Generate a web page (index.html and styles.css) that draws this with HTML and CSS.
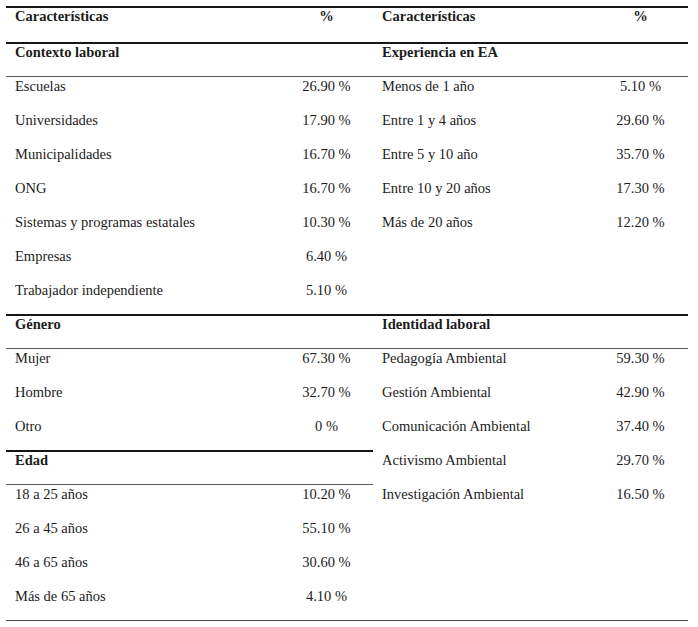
FILE: index.html
```html
<!DOCTYPE html>
<html lang="es">
<head>
<meta charset="utf-8">
<title>Características</title>
<link rel="stylesheet" href="styles.css">
</head>
<body>
<div class="sheet">
  <div class="tbl">
    <div class="row head">
      <div class="c t b">Características</div><div class="c t b n">%</div>
      <div class="c t b">Características</div><div class="c t b n">%</div>
    </div>
    <div class="row">
      <div class="c t b">Contexto laboral</div><div class="c t"></div>
      <div class="c t b">Experiencia en EA</div><div class="c t"></div>
    </div>
    <div class="row">
      <div class="c s">Escuelas</div><div class="c s n">26.90 %</div>
      <div class="c s">Menos de 1 año</div><div class="c s n">5.10 %</div>
    </div>
    <div class="row">
      <div class="c">Universidades</div><div class="c n">17.90 %</div>
      <div class="c">Entre 1 y 4 años</div><div class="c n">29.60 %</div>
    </div>
    <div class="row">
      <div class="c">Municipalidades</div><div class="c n">16.70 %</div>
      <div class="c">Entre 5 y 10 año</div><div class="c n">35.70 %</div>
    </div>
    <div class="row">
      <div class="c">ONG</div><div class="c n">16.70 %</div>
      <div class="c">Entre 10 y 20 años</div><div class="c n">17.30 %</div>
    </div>
    <div class="row">
      <div class="c">Sistemas y programas estatales</div><div class="c n">10.30 %</div>
      <div class="c">Más de 20 años</div><div class="c n">12.20 %</div>
    </div>
    <div class="row">
      <div class="c">Empresas</div><div class="c n">6.40 %</div>
      <div class="c"></div><div class="c"></div>
    </div>
    <div class="row">
      <div class="c">Trabajador independiente</div><div class="c n">5.10 %</div>
      <div class="c"></div><div class="c"></div>
    </div>
    <div class="row">
      <div class="c t b">Género</div><div class="c t"></div>
      <div class="c t b">Identidad laboral</div><div class="c t"></div>
    </div>
    <div class="row">
      <div class="c s">Mujer</div><div class="c s n">67.30 %</div>
      <div class="c s">Pedagogía Ambiental</div><div class="c s n">59.30 %</div>
    </div>
    <div class="row">
      <div class="c">Hombre</div><div class="c n">32.70 %</div>
      <div class="c">Gestión Ambiental</div><div class="c n">42.90 %</div>
    </div>
    <div class="row">
      <div class="c">Otro</div><div class="c n">0 %</div>
      <div class="c">Comunicación Ambiental</div><div class="c n">37.40 %</div>
    </div>
    <div class="row">
      <div class="c t b">Edad</div><div class="c t"></div>
      <div class="c">Activismo Ambiental</div><div class="c n">29.70 %</div>
    </div>
    <div class="row">
      <div class="c s">18 a 25 años</div><div class="c s n">10.20 %</div>
      <div class="c">Investigación Ambiental</div><div class="c n">16.50 %</div>
    </div>
    <div class="row">
      <div class="c">26 a 45 años</div><div class="c n">55.10 %</div>
      <div class="c"></div><div class="c"></div>
    </div>
    <div class="row">
      <div class="c">46 a 65 años</div><div class="c n">30.60 %</div>
      <div class="c"></div><div class="c"></div>
    </div>
    <div class="row">
      <div class="c">Más de 65 años</div><div class="c n">4.10 %</div>
      <div class="c"></div><div class="c"></div>
    </div>
  </div>
</div>
</body>
</html>
```
FILE: styles.css
```css
html, body {
  margin: 0;
  padding: 0;
  background: #ffffff;
}

.sheet {
  padding: 6px 0 0 6px;
  font-family: "Liberation Serif", "Times New Roman", "DejaVu Serif", serif;
  font-size: 14.5px;
  line-height: 16px;
  color: #1c1c1c;
}

.tbl {
  width: 682px;
  border-bottom: 1px solid #4a4a4a;
}

.row {
  display: grid;
  grid-template-columns: 274px 93px 220px 95px;
  height: 34px;
}

.row.head {
  height: 36px;
}

.c {
  box-sizing: border-box;
  padding: 0 0 0 9px;
  border-top: 2px solid transparent;
  white-space: nowrap;
}

.c.t {
  border-top-color: #161616;
}

.c.s {
  border-top: 1px solid #5a5a5a;
  padding-top: 1px;
}

.c.n {
  padding-left: 0;
  text-align: center;
}

.c.b {
  font-weight: bold;
}
```
